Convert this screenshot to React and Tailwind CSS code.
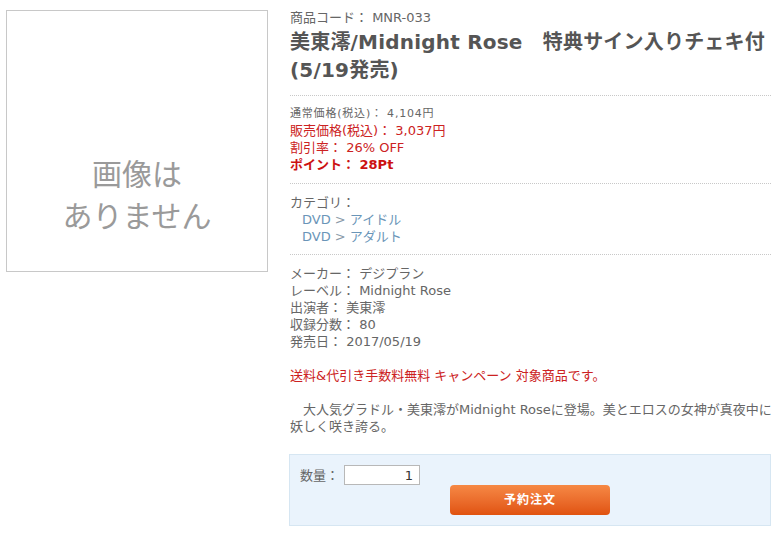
import React from 'react';

const font = "font-['DejaVu_Sans','Noto_Sans_CJK_JP',sans-serif]";

export default function App() {
  return (
    <div className={`${font} bg-white min-h-[538px] w-[781px] flex items-start gap-[22px] pl-[6px] pt-[10px] text-[#666] text-[13px] leading-[17px]`}>
      <div className="w-[262px] h-[262px] shrink-0 border border-[#c8c8c8] flex flex-col items-center pt-[143px] text-[30px] leading-[42px] text-[#9a9a9a]">
        <span>画像は</span>
        <span>ありません</span>
      </div>

      <div className="w-[481px]">
        <div className="leading-[16px]">商品コード： MNR-033</div>
        <h1 className="mt-[2px] text-[20px] leading-[28px] font-bold text-[#555] tracking-[0.2px]">
          美東澪/Midnight Rose　特典サイン入りチェキ付(5/19発売)
        </h1>

        <div className="mt-[11px] border-t border-dotted border-[#c8c8c8] pt-[9px] pb-[10px]">
          <div className="text-[11px] tracking-[0.8px]">通常価格(税込)： 4,104円</div>
          <div className="text-[#cc2222]">販売価格(税込)： 3,037円</div>
          <div className="text-[#cc2222]">割引率： 26% OFF</div>
          <div className="text-[#cc1111] font-bold">ポイント： 28Pt</div>
        </div>

        <div className="border-t border-dotted border-[#c8c8c8] pt-[10px] pb-[9px]">
          <div>カテゴリ：</div>
          <div className="pl-[12px] text-[#6a95b8]">DVD <span className="text-[#8a9aa8]">&gt;</span> アイドル</div>
          <div className="pl-[12px] text-[#6a95b8]">DVD <span className="text-[#8a9aa8]">&gt;</span> アダルト</div>
        </div>

        <div className="border-t border-dotted border-[#c8c8c8] pt-[10px]">
          <div>メーカー： デジプラン</div>
          <div>レーベル： Midnight Rose</div>
          <div>出演者： 美東澪</div>
          <div>収録分数： 80</div>
          <div>発売日： 2017/05/19</div>
        </div>

        <p className="mt-[17px] text-[#cc2222]">送料&amp;代引き手数料無料 キャンペーン 対象商品です。</p>

        <p className="mt-[17px] whitespace-nowrap">
          {'\u3000'}大人気グラドル・美東澪がMidnight Roseに登場。美とエロスの女神が真夜中に<br />
          妖しく咲き誇る。
        </p>

        <div className="mt-[19px] -ml-[1px] border border-[#d6e6f2] bg-[#eaf3fc] px-[10px] pt-[10px] pb-[10px]">
          <div className="flex items-center gap-[5px]">
            <span>数量：</span>
            <input
              type="text"
              defaultValue="1"
              className={`${font} w-[76px] h-[20px] border border-[#b8b8b8] bg-white text-right pr-[6px] text-[13px] text-[#333] outline-none`}
            />
          </div>
          <div className="flex justify-center">
            <button className="w-[160px] h-[30px] rounded-[4px] bg-linear-to-b from-[#f68844] to-[#e0520e] text-white text-[12px] font-bold tracking-[1px]">
              予約注文
            </button>
          </div>
        </div>
      </div>
    </div>
  );
}
